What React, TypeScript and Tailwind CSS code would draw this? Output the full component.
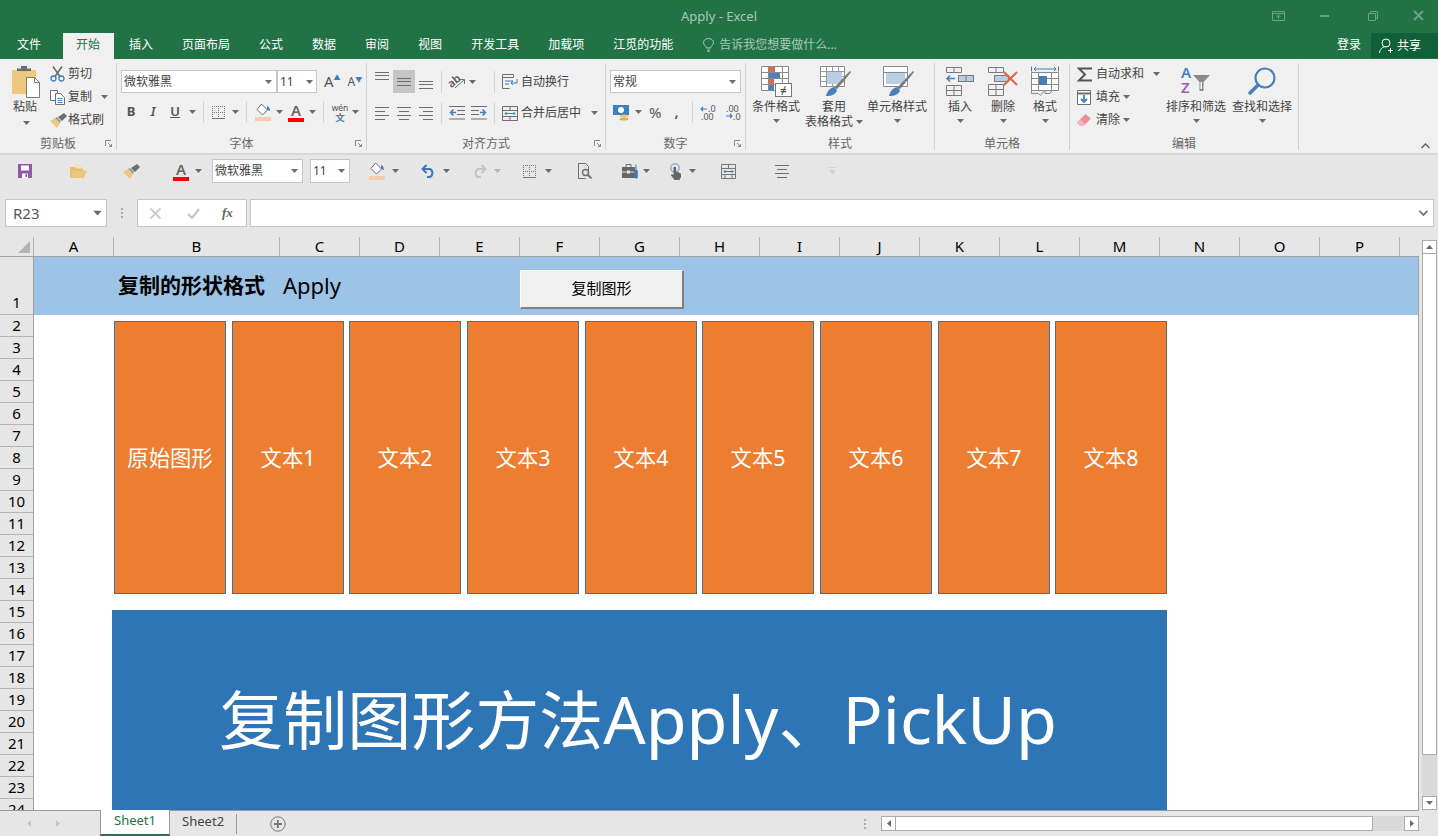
import type { ReactNode } from 'react'

type IconProps = { className?: string }

const COLUMNS = [
  { name: 'A', w: 'w-[80px]' }, { name: 'B', w: 'w-[166px]' }, { name: 'C', w: 'w-[80px]' }, { name: 'D', w: 'w-[80px]' },
  { name: 'E', w: 'w-[80px]' }, { name: 'F', w: 'w-[80px]' }, { name: 'G', w: 'w-[80px]' }, { name: 'H', w: 'w-[80px]' },
  { name: 'I', w: 'w-[80px]' }, { name: 'J', w: 'w-[80px]' }, { name: 'K', w: 'w-[80px]' }, { name: 'L', w: 'w-[80px]' },
  { name: 'M', w: 'w-[80px]' }, { name: 'N', w: 'w-[80px]' }, { name: 'O', w: 'w-[80px]' }, { name: 'P', w: 'w-[80px]' },
]

const SHAPES = [
  { label: '原始图形', gap: 'ml-[80px]' },
  { label: '文本1', gap: 'ml-[6px]' },
  { label: '文本2', gap: 'ml-[5px]' },
  { label: '文本3', gap: 'ml-[6px]' },
  { label: '文本4', gap: 'ml-[6px]' },
  { label: '文本5', gap: 'ml-[5px]' },
  { label: '文本6', gap: 'ml-[6px]' },
  { label: '文本7', gap: 'ml-[6px]' },
  { label: '文本8', gap: 'ml-[5px]' },
]

const TABS = ['插入', '页面布局', '公式', '数据', '审阅', '视图', '开发工具', '加载项', '江觅的功能']

const ROWS = Array.from({ length: 23 }, (_, i) => i + 2)

/* ---------- 小图标 ---------- */

function Caret({ className = '' }: IconProps) {
  return (
    <svg className={`w-[7px] h-[4px] shrink-0 ${className}`} viewBox="0 0 7 4">
      <path d="M0 0h7L3.5 4z" fill="#6b6b6b" />
    </svg>
  )
}

function Launcher() {
  return (
    <svg className="w-[7px] h-[7px]" viewBox="0 0 7 7" fill="none" stroke="#8a8a8a">
      <path d="M.5 6V.5H6M3 3l3.5 3.5M4 6.5h2.500V4" />
    </svg>
  )
}

function Paste() {
  return (
    <svg className="w-[30px] h-[33px]" viewBox="0 0 30 33">
      <rect x="0" y="5" width="24" height="24" rx="1" fill="#edc87e" />
      <path d="M5 6V3.500h4V1h6v2.500h4V6z" fill="#6e6e6e" />
      <path d="M14.500 12.500h8l5 5v15h-13z" fill="#fff" stroke="#7a7a7a" />
      <path d="M22.500 12.500v5h5" fill="none" stroke="#7a7a7a" />
    </svg>
  )
}

function Scissors() {
  return (
    <svg className="w-[15px] h-[16px]" viewBox="0 0 15 16" fill="none">
      <path d="M3 .5l7 10M12 .5l-7 10" stroke="#6a6a6a" strokeWidth="1.600" />
      <circle cx="3.500" cy="12.500" r="2.500" stroke="#3f7fbf" strokeWidth="1.300" />
      <circle cx="11.500" cy="12.500" r="2.500" stroke="#3f7fbf" strokeWidth="1.300" />
    </svg>
  )
}

function CopyDocs() {
  return (
    <svg className="w-[15px] h-[15px]" viewBox="0 0 15 15" fill="#fff" stroke="#6f6f6f">
      <path d="M.5.500h7v10h-7z" />
      <path d="M5.500 3.500h5l4 4v7h-9z" />
      <path d="M7.500 8.500h5M7.500 10.500h5M7.500 12.500h5" stroke="#4a7fb8" />
    </svg>
  )
}

function Brush({ className = '' }: IconProps) {
  return (
    <svg className={`w-[17px] h-[15px] ${className}`} viewBox="0 0 17 15">
      <path d="M0 8l5-3 5 5-3 5z" fill="#edc87e" />
      <path d="M5 5l2-1 4 4-1 2z" fill="#9a9a9a" />
      <path d="M8 4l6-4 3 3-5 5z" fill="#6e6e6e" />
    </svg>
  )
}

function Borders({ className = '' }: IconProps) {
  return (
    <svg className={`w-[13px] h-[13px] ${className}`} viewBox="0 0 13 13" fill="none" stroke="#777" strokeDasharray="1 1">
      <path d="M0 .5h13M0 6.500h13M6.500 0v13M.5 0v13M12.500 0v13" />
      <path d="M0 12.500h13" strokeDasharray="none" />
    </svg>
  )
}

function Bucket({ className = '' }: IconProps) {
  return (
    <svg className={`w-[16px] h-[18px] ${className}`} viewBox="0 0 16 18">
      <path d="M6.500 1l6 6-5 5-5.500-5.500z" fill="#fff" stroke="#6b6b6b" />
      <path d="M12 3c2 1 3 2 3 5-1.500-.5-2-1-3-1.500z" fill="#4a7fb8" />
      <rect y="14" width="16" height="4" fill="#f8cbad" />
    </svg>
  )
}

function FontColor({ className = '' }: IconProps) {
  return (
    <div className={`w-[16px] flex flex-col items-center ${className}`}>
      <span className="text-[15px] leading-[15px] font-semibold text-[#666]">A</span>
      <span className="block w-[16px] h-[4px] bg-[#ff0000]" />
    </div>
  )
}

function Wen() {
  return (
    <svg className="w-[16px] h-[17px] overflow-visible" viewBox="0 0 16 17">
      <text x="8" y="7" textAnchor="middle" fontSize="8.500" fill="#555">wén</text>
      <text x="8" y="17" textAnchor="middle" fontSize="9.500" fontWeight="700" fill="#3f7fbf">文</text>
    </svg>
  )
}

function Lines({ kind, className = '' }: { kind: 'left' | 'center' | 'right'; className?: string }) {
  const d =
    kind === 'left' ? 'M0 .5h14M0 4.500h10M0 8.500h14M0 12.500h10'
    : kind === 'center' ? 'M0 .5h14M2 4.500h10M0 8.500h14M2 12.500h10'
    : 'M0 .5h14M4 4.500h10M0 8.500h14M4 12.500h10'
  return (
    <svg className={`w-[14px] h-[13px] ${className}`} viewBox="0 0 14 13" fill="none" stroke="#6e6e6e">
      <path d={d} />
    </svg>
  )
}

function VAlign() {
  return (
    <svg className="w-[14px] h-[8px]" viewBox="0 0 14 8" fill="none" stroke="#6e6e6e">
      <path d="M0 .5h14M0 3.500h14M0 7.500h14" />
    </svg>
  )
}

function Orient() {
  return (
    <svg className="w-[16px] h-[15px] overflow-visible" viewBox="0 0 16 15" fill="none">
      <text x="-1" y="11" fontSize="11" fontWeight="600" fill="#555" transform="rotate(-40 5 8)">ab</text>
      <path d="M6 14L15 6M11 5.500h4.500V10" stroke="#6e6e6e" />
    </svg>
  )
}

function Indent({ flip }: { flip?: boolean }) {
  return (
    <svg className={`w-[16px] h-[14px] ${flip ? '-scale-x-100' : ''}`} viewBox="0 0 16 14" fill="none">
      <path d="M0 .5h16M8 4.500h8M8 8.500h8M0 13h16" stroke="#6e6e6e" />
      <path d="M7 6.500H2M4.500 3.500l-3 3 3 3" stroke="#3f7fbf" strokeWidth="1.500" />
    </svg>
  )
}

function Wrap() {
  return (
    <svg className="w-[16px] h-[15px]" viewBox="0 0 16 15" fill="none" stroke="#6e6e6e">
      <path d="M.5.500h11v3H.5zM.5 3.500v11h7" />
      <path d="M3 7h8M3 10h4" stroke="#3f7fbf" />
      <path d="M15 5v4h-6M11 7l-2 2 2 2" stroke="#3f7fbf" />
    </svg>
  )
}

function Merge() {
  return (
    <svg className="w-[16px] h-[15px]" viewBox="0 0 16 15" fill="none" stroke="#6e6e6e">
      <path d="M.5.500h15v14H.5zM.5 4.500h15M.5 10.500h15M8 .5v4M8 10.500v4" />
      <path d="M3 7.500h10M4.500 6L3 7.500 4.500 9M11.500 6L13 7.500 11.500 9" stroke="#3f7fbf" />
    </svg>
  )
}

function Currency() {
  return (
    <svg className="w-[17px] h-[17px]" viewBox="0 0 17 17">
      <rect x="0" y="1" width="16" height="10" fill="#3f7fbf" />
      <circle cx="8" cy="6" r="3" fill="#fff" />
      <ellipse cx="11" cy="12" rx="4.500" ry="1.500" fill="#edc87e" />
      <ellipse cx="11" cy="15" rx="4.500" ry="1.500" fill="#e2ad5a" />
    </svg>
  )
}

function Decimal({ up }: { up: boolean }) {
  return (
    <svg className="w-[16px] h-[15px] overflow-visible" viewBox="0 0 16 15">
      <text x={up ? 8 : 1} y="7" fontSize="9" fill="#555">{up ? '.0' : '.00'}</text>
      <text x={up ? 1 : 8} y="15" fontSize="9" fill="#555">{up ? '.00' : '.0'}</text>
      <path d={up ? 'M7 4H1M3 2L1 4l2 2' : 'M1 11h6M5 9l2 2-2 2'} fill="none" stroke="#3f7fbf" strokeWidth="1.200" />
    </svg>
  )
}

function CondFormat() {
  return (
    <svg className="w-[31px] h-[31px]" viewBox="0 0 31 31">
      <path d="M.5.500h27v24H.5zM.5 6.500h27M.5 12.500h27M.5 18.500h27M7.500.5v24M21.500.5v24" fill="#fff" stroke="#8a8a8a" />
      <rect x="8" y="1" width="6" height="5" fill="#e0684a" />
      <rect x="8" y="7" width="11" height="5" fill="#4a7fb8" />
      <rect x="8" y="13" width="5" height="5" fill="#e0684a" />
      <rect x="8" y="19" width="5" height="5" fill="#4a7fb8" />
      <rect x="14.500" y="17.500" width="16" height="13" fill="#fff" stroke="#777" />
      <text x="22.500" y="28" textAnchor="middle" fontSize="11" fontWeight="700" fill="#555">≠</text>
    </svg>
  )
}

function TableStyle({ cell }: { cell?: boolean }) {
  return (
    <svg className="w-[31px] h-[30px] ml-[3px]" viewBox="0 0 31 30">
      <path d="M.5.500h24v20H.5z" fill="#fff" stroke="#8a8a8a" />
      {cell
        ? <path d="M.5 6.500h24" stroke="#8a8a8a" />
        : <path d="M.5 5.500h24M.5 10.500h24M.5 15.500h24M6.500.5v20M12.500.5v20M18.500.5v20" stroke="#9a9a9a" />}
      <rect x={cell ? 3 : 7} y={cell ? 7 : 6} width={cell ? 19 : 15} height={cell ? 11 : 12} fill="#b9cde5" />
      <path d="M14 22l12-13 4-4 1 1-3 4-11 13z" fill="#7a7a7a" />
      <path d="M6 30c1-5 4-8 8-9l3 3c-1 4-5 6-11 6z" fill="#4a7fb8" />
    </svg>
  )
}

function InsertCells() {
  return (
    <svg className="w-[28px] h-[29px]" viewBox="0 0 28 29" fill="none" stroke="#7a7a7a">
      <path d="M.5.500h15v5H.5zM8 .5v5M.5 18.500h15v10H.5zM.5 23.500h15M8 18.500v10" />
      <rect x="12.500" y="8.500" width="15" height="6" fill="#b9cde5" />
      <path d="M20 8.500v6" />
      <path d="M9 11.500H1M4 8.500l-3 3 3 3" stroke="#3f7fbf" strokeWidth="1.500" />
    </svg>
  )
}

function DeleteCells() {
  return (
    <svg className="w-[30px] h-[29px]" viewBox="0 0 30 29" fill="none" stroke="#7a7a7a">
      <path d="M.5.500h15v5H.5zM8 .5v5M.5 17.500h15v11H.5zM.5 22.500h15M8 17.500v11" />
      <rect x="6.500" y="8.500" width="14" height="6" fill="#b9cde5" />
      <path d="M16 5l13 13M29 5L16 18" stroke="#e0684a" strokeWidth="2.200" />
    </svg>
  )
}

function FormatCells() {
  return (
    <svg className="w-[28px] h-[31px]" viewBox="0 0 28 31" fill="none">
      <path d="M.5.500v5M27.500.5v5M3 3h22M5 1L3 3l2 2M23 1l2 2-2 2" stroke="#3f7fbf" />
      <path d="M.5 6.500h27v18H.5zM.5 12.500h27M.5 18.500h27M7.500 6.500v18M20.500 6.500v18" stroke="#8a8a8a" fill="#fff" />
      <rect x="8" y="10" width="8" height="9" fill="#4a7fb8" />
      <path d="M.5 24.500v3h7l2 2 3-4M14 24.500v3h5l2-3" stroke="#8a8a8a" />
    </svg>
  )
}

function Sigma() {
  return (
    <svg className="w-[16px] h-[15px]" viewBox="0 0 16 15" fill="none" stroke="#555" strokeWidth="2">
      <path d="M15 1.500H2l6 6-6 6h13" />
    </svg>
  )
}

function FillDown() {
  return (
    <svg className="w-[14px] h-[15px]" viewBox="0 0 14 15" fill="#fff" stroke="#6e6e6e">
      <path d="M.5.500h13v14H.5z" />
      <path d="M.5 3.500h13" strokeWidth="2" />
      <path d="M7 5v7M4 9l3 3 3-3" fill="none" stroke="#3f7fbf" strokeWidth="1.800" />
    </svg>
  )
}

function Eraser() {
  return (
    <svg className="w-[14px] h-[13px]" viewBox="0 0 14 13">
      <path d="M0 8.500L8.500 0 14 4.500 6.500 12H3z" fill="#ee8f9b" />
      <path d="M0 8.500L3 12h3.500L8 10.500 3.500 5.500z" fill="#f3b7bf" />
    </svg>
  )
}

function SortFilter() {
  return (
    <svg className="w-[30px] h-[30px] overflow-visible" viewBox="0 0 30 30">
      <text x="0" y="12" fontSize="15" fontWeight="600" fill="#3f7fbf">A</text>
      <text x="0" y="27" fontSize="15" fontWeight="600" fill="#9a5fb8">Z</text>
      <path d="M12 9h17l-6.500 7v9h-4v-9z" fill="#8a8a8a" />
      <path d="M19.500 16v7h1.500v-7z" fill="#fff" />
    </svg>
  )
}

function Find() {
  return (
    <svg className="w-[28px] h-[28px]" viewBox="0 0 28 28" fill="none" stroke="#4a7fb8">
      <circle cx="17" cy="11" r="9.500" strokeWidth="2.200" />
      <path d="M10 18L2 26" strokeWidth="3.500" strokeLinecap="round" />
    </svg>
  )
}

function Save({ className = '' }: IconProps) {
  return (
    <svg className={`w-[14px] h-[14px] ${className}`} viewBox="0 0 14 14">
      <path d="M0 0h14v14H0z" fill="#8e5aa8" />
      <path d="M3 1.500h8v5H3z" fill="#fff" />
      <path d="M4 9.500h6V14H4z" fill="#fff" />
      <path d="M7.500 10h1.500v3H7.500z" fill="#8e5aa8" />
    </svg>
  )
}

function Folder({ className = '' }: IconProps) {
  return (
    <svg className={`w-[17px] h-[13px] ${className}`} viewBox="0 0 17 13">
      <path d="M0 2h5l1 1.500h7V13H0z" fill="#e5bd74" />
      <path d="M4 0h9v3H6z" fill="#f5e3b8" />
      <path d="M3 5.500h14L14 13H0z" fill="#edc87e" />
    </svg>
  )
}

function Undo({ className = '', muted }: IconProps & { muted?: boolean }) {
  return (
    <svg className={`h-[14px] w-[15px] ${muted ? '-scale-x-100' : ''} ${className}`} viewBox="0 0 15 14" fill="none" stroke={muted ? '#c4c4c4' : '#3f78b5'} strokeWidth="2">
      <path d="M2 5h7a4.500 4.500 0 010 8H6M5.500 1L1.500 5l4 4" />
    </svg>
  )
}

function Preview({ className = '' }: IconProps) {
  return (
    <svg className={`w-[14px] h-[16px] ${className}`} viewBox="0 0 14 16" fill="#e6e6e6" stroke="#6e6e6e">
      <path d="M.5.500h7l3 3v5M.5.500v15h7" />
      <circle cx="7.500" cy="9.500" r="3" strokeWidth="1.400" />
      <path d="M10 12l3.500 3.500" strokeWidth="1.800" />
    </svg>
  )
}

function Toolbox({ className = '' }: IconProps) {
  return (
    <svg className={`w-[16px] h-[15px] ${className}`} viewBox="0 0 16 15">
      <path d="M4 3V0.500h5V3" fill="none" stroke="#666" />
      <path d="M0 3h13v11H0z" fill="#666" />
      <path d="M0 7.500h13v1H0z" fill="#e6e6e6" />
      <rect x="5" y="6.500" width="3" height="3" fill="#e6e6e6" />
      <path d="M14 0.500v6M12.800 6.500h2.400V14h-2.400z" fill="#3f78b5" stroke="#3f78b5" />
    </svg>
  )
}

function Touch({ className = '' }: IconProps) {
  return (
    <svg className={`w-[12px] h-[17px] ${className}`} viewBox="0 0 12 17">
      <circle cx="5" cy="5" r="4.200" fill="none" stroke="#8fb4d9" strokeWidth="1.600" />
      <path d="M3.500 5a1.300 1.300 0 012.600 0v3.500l4 1.500.9 1v3l-1.500 3H4.500L1 12.500l.5-1.500 2 1z" fill="#666" />
    </svg>
  )
}

function ColWidth({ className = '' }: IconProps) {
  return (
    <svg className={`w-[15px] h-[15px] ${className}`} viewBox="0 0 15 15" fill="none" stroke="#777">
      <path d="M.5.500h14v14H.5zM.5 4.500h14M.5 10.500h14M7.500.5v4M4 10.500v4M11 10.500v4" />
      <path d="M3 7.500h9M4.500 6L3 7.500 4.500 9M10.500 6L12 7.500 10.500 9" stroke="#3f7fbf" />
    </svg>
  )
}

/* ---------- 功能区 ---------- */

function Group({ width, label, launcher, children }: { width: string; label: string; launcher?: boolean; children: ReactNode }) {
  return (
    <div className={`${width} h-[87px] shrink-0 flex flex-col border-r border-[#d2d2d2]`}>
      <div className="h-[74px] relative">{children}</div>
      <div className="h-[13px] grid grid-cols-[1fr_auto_1fr] items-center text-[12px] leading-[13px] text-[#666]">
        <span />
        <span>{label}</span>
        {launcher ? <span className="justify-self-end mr-[4px] flex"><Launcher /></span> : <span />}
      </div>
    </div>
  )
}

function BigButton({ width, icon, lines, inlineCaret }: { width: string; icon: ReactNode; lines: string[]; inlineCaret?: boolean }) {
  return (
    <div className={`${width} shrink-0 flex flex-col items-center`}>
      <div className="h-[36px] flex items-center justify-center">{icon}</div>
      <span className="text-[12px] leading-[15px] text-[#444] whitespace-nowrap">{lines[0]}</span>
      {lines[1] ? (
        <span className="text-[12px] leading-[15px] text-[#444] whitespace-nowrap flex items-center">
          {lines[1]}{inlineCaret && <Caret className="ml-[3px]" />}
        </span>
      ) : (
        <Caret className="mt-[5px]" />
      )}
    </div>
  )
}

function SmallRow({ icon, text, caret, caretGap = 'ml-[3px]', iconBox = 'w-[18px]' }: { icon: ReactNode; text: string; caret?: boolean; caretGap?: string; iconBox?: string }) {
  return (
    <div className="h-[20px] flex items-center text-[12px] text-[#444] whitespace-nowrap">
      <span className={`${iconBox} flex shrink-0`}>{icon}</span>
      <span>{text}</span>
      {caret && <Caret className={caretGap} />}
    </div>
  )
}

function Combo({ width, text, caretClass = 'ml-auto mr-[4px]', height = 'h-[23px]' }: { width: string; text: string; caretClass?: string; height?: string }) {
  return (
    <div className={`${width} ${height} shrink-0 bg-white border border-[#c6c6c6] flex items-center pl-[2px] text-[12px] text-[#444] whitespace-nowrap overflow-hidden`}>
      <span>{text}</span>
      <Caret className={caretClass} />
    </div>
  )
}

function Sep({ className = '' }: IconProps) {
  return <span className={`block w-px h-[22px] bg-[#d2d2d2] shrink-0 ${className}`} />
}

function Ribbon() {
  return (
    <div className="h-[94px] bg-[#f0f0f0] flex pt-[4px]">
      <Group width="w-[117px]" label="剪贴板" launcher>
        <div className="flex">
          <div className="w-[50px] flex flex-col items-center pt-[2px]">
            <div className="ml-[4px]"><Paste /></div>
            <span className="text-[12px] leading-[16px] mt-[1px] text-[#444]">粘贴</span>
            <Caret className="mt-[6px] ml-[2px]" />
          </div>
          <div className="flex flex-col gap-[3px] mt-[1px]">
            <SmallRow icon={<Scissors />} text="剪切" />
            <SmallRow icon={<CopyDocs />} text="复制" caret caretGap="ml-[9px]" />
            <SmallRow icon={<Brush />} text="格式刷" />
          </div>
        </div>
      </Group>

      <Group width="w-[250px]" label="字体" launcher>
        <div className="flex items-center mt-[7px] ml-[4px]">
          <Combo width="w-[156px]" text="微软雅黑" />
          <Combo width="w-[40px]" text="11" caretClass="ml-auto mr-[3px]" />
          <span className="ml-[7px] text-[15px] leading-none text-[#555] flex items-start">A<span className="text-[7px] text-[#3f7fbf]">▲</span></span>
          <span className="ml-[7px] text-[12px] leading-none text-[#555] flex items-start">A<span className="text-[7px] text-[#3f7fbf]">▼</span></span>
        </div>
        <div className="flex items-center mt-[7px] h-[24px] ml-[3px] text-[#555]">
          <span className="w-[22px] text-center text-[13px] font-bold">B</span>
          <span className="w-[22px] text-center text-[13px] italic font-semibold">I</span>
          <span className="w-[22px] text-center text-[13px] font-semibold underline">U</span>
          <Caret className="ml-[3px]" />
          <Sep className="ml-[7px]" />
          <Borders className="ml-[8px]" />
          <Caret className="ml-[7px]" />
          <Sep className="ml-[7px]" />
          <Bucket className="ml-[8px]" />
          <Caret className="ml-[5px]" />
          <FontColor className="ml-[5px]" />
          <Caret className="ml-[5px]" />
          <Sep className="ml-[7px]" />
          <span className="ml-[8px] flex"><Wen /></span>
          <Caret className="ml-[4px]" />
        </div>
      </Group>

      <Group width="w-[239px]" label="对齐方式" launcher>
        <div className="flex items-center mt-[7px] h-[23px] ml-[4px]">
          <span className="w-[22px] h-[23px] flex justify-center items-start pt-[2px]"><VAlign /></span>
          <span className="w-[22px] h-[23px] flex justify-center items-center bg-[#c6c6c6]"><VAlign /></span>
          <span className="w-[22px] h-[23px] flex justify-center items-end pb-[4px]"><VAlign /></span>
          <Sep className="ml-[4px]" />
          <span className="ml-[7px] flex"><Orient /></span>
          <Caret className="ml-[4px]" />
          <Sep className="ml-[18px]" />
          <div className="ml-[7px] flex items-center gap-[3px] text-[12px] text-[#444]"><Wrap /><span>自动换行</span></div>
        </div>
        <div className="flex items-center mt-[8px] h-[24px] ml-[8px]">
          <Lines kind="left" />
          <Lines kind="center" className="ml-[8px]" />
          <Lines kind="right" className="ml-[8px]" />
          <Sep className="ml-[8px]" />
          <span className="ml-[7px] flex"><Indent /></span>
          <span className="ml-[6px] flex"><Indent flip /></span>
          <Sep className="ml-[7px]" />
          <div className="ml-[7px] flex items-center gap-[3px] text-[12px] text-[#444]"><Merge /><span>合并后居中</span></div>
          <Caret className="ml-[10px]" />
        </div>
      </Group>

      <Group width="w-[140px]" label="数字" launcher>
        <div className="mt-[7px] ml-[4px]">
          <Combo width="w-[131px]" text="常规" />
        </div>
        <div className="flex items-center mt-[7px] h-[24px] ml-[7px]">
          <Currency />
          <Caret className="ml-[5px]" />
          <span className="ml-[7px] text-[15px] text-[#555]">%</span>
          <span className="ml-[13px] text-[14px] font-bold text-[#555] leading-none">,</span>
          <Sep className="ml-[14px]" />
          <span className="ml-[7px] flex"><Decimal up /></span>
          <span className="ml-[9px] flex"><Decimal up={false} /></span>
        </div>
      </Group>

      <Group width="w-[189px]" label="样式">
        <div className="flex">
          <BigButton width="w-[60px]" icon={<CondFormat />} lines={['条件格式']} />
          <BigButton width="w-[56px]" icon={<TableStyle />} lines={['套用', '表格格式']} inlineCaret />
          <BigButton width="w-[70px]" icon={<TableStyle cell />} lines={['单元格样式']} />
        </div>
      </Group>

      <Group width="w-[135px]" label="单元格">
        <div className="flex ml-[4px]">
          <BigButton width="w-[42px]" icon={<InsertCells />} lines={['插入']} />
          <BigButton width="w-[44px]" icon={<DeleteCells />} lines={['删除']} />
          <BigButton width="w-[40px]" icon={<FormatCells />} lines={['格式']} />
        </div>
      </Group>

      <Group width="w-[229px]" label="编辑">
        <div className="flex">
          <div className="w-[92px] pl-[7px] mt-[1px] flex flex-col gap-[3px]">
            <SmallRow icon={<Sigma />} text="自动求和" caret caretGap="ml-[9px]" iconBox="w-[19px]" />
            <SmallRow icon={<FillDown />} text="填充" caret caretGap="ml-[3px]" iconBox="w-[19px]" />
            <SmallRow icon={<Eraser />} text="清除" caret caretGap="ml-[3px]" iconBox="w-[19px]" />
          </div>
          <BigButton width="w-[68px]" icon={<SortFilter />} lines={['排序和筛选']} />
          <BigButton width="w-[64px]" icon={<Find />} lines={['查找和选择']} />
        </div>
      </Group>

      <div className="flex-1 flex justify-end items-end pb-[4px] pr-[8px]">
        <svg className="w-[9px] h-[6px]" viewBox="0 0 9 6" fill="none" stroke="#666" strokeWidth="1.500">
          <path d="M.5 5l4-4 4 4" />
        </svg>
      </div>
    </div>
  )
}

function QuickBar() {
  return (
    <div className="h-[46px] bg-[#e6e6e6] border-t-2 border-[#d8d8d8] flex items-start pt-[4px]">
      <div className="h-[24px] flex items-center">
        <Save className="ml-[18px]" />
        <Folder className="ml-[38px]" />
        <Brush className="ml-[36px]" />
        <FontColor className="ml-[33px]" />
        <Caret className="ml-[6px]" />
        <Combo width="w-[91px] ml-[10px]" height="h-[24px]" text="微软雅黑" />
        <Combo width="w-[40px] ml-[7px]" height="h-[24px]" text="11" />
        <Bucket className="ml-[19px]" />
        <Caret className="ml-[7px]" />
        <Undo className="ml-[22px]" />
        <Caret className="ml-[7px]" />
        <Undo muted className="ml-[22px]" />
        <Caret className="ml-[7px] opacity-40" />
        <Borders className="ml-[22px]" />
        <Caret className="ml-[9px]" />
        <Preview className="ml-[26px]" />
        <Toolbox className="ml-[30px]" />
        <Caret className="ml-[5px]" />
        <Touch className="ml-[20px]" />
        <Caret className="ml-[7px]" />
        <ColWidth className="ml-[25px]" />
        <Lines kind="center" className="ml-[39px]" />
        <svg className="w-[7px] h-[8px] ml-[40px]" viewBox="0 0 7 8">
          <path d="M0 0h7v1H0zM0 3h7L3.500 8z" fill="#d2d2d2" />
        </svg>
      </div>
    </div>
  )
}

function FormulaBar() {
  return (
    <div className="h-[28px] bg-[#e6e6e6] flex">
      <div className="ml-[5px] w-[102px] bg-white border border-[#c6c6c6] flex items-center pl-[7px] text-[15px] text-[#555]">
        <span>R23</span>
        <Caret className="ml-auto mr-[5px] scale-125" />
      </div>
      <div className="w-[30px] flex flex-col items-center justify-center gap-[2px]">
        <span className="w-[2px] h-[2px] bg-[#aaa]" />
        <span className="w-[2px] h-[2px] bg-[#aaa]" />
        <span className="w-[2px] h-[2px] bg-[#aaa]" />
      </div>
      <div className="w-[110px] bg-white border border-[#c6c6c6] flex items-center">
        <svg className="ml-[12px] w-[11px] h-[11px]" viewBox="0 0 11 11" fill="none" stroke="#c6c6c6" strokeWidth="1.800">
          <path d="M.5.500l10 10M10.500.5l-10 10" />
        </svg>
        <svg className="ml-[26px] w-[13px] h-[11px]" viewBox="0 0 13 11" fill="none" stroke="#c6c6c6" strokeWidth="2.200">
          <path d="M1 6l4 4 7-9" />
        </svg>
        <span className="ml-[22px] text-[13px] italic font-semibold text-[#666] font-['Liberation_Serif',serif]">fx</span>
      </div>
      <div className="ml-[3px] w-[1184px] bg-white border border-[#c6c6c6] flex items-center justify-end pr-[5px]">
        <svg className="w-[9px] h-[6px]" viewBox="0 0 9 6" fill="none" stroke="#777" strokeWidth="1.800">
          <path d="M.5 1l4 4 4-4" />
        </svg>
      </div>
    </div>
  )
}

function Sheet() {
  return (
    <div className="shrink-0 flex flex-col min-h-0 w-[1419px]">
      {/* 列标题 */}
      <div className="h-[20px] flex shrink-0 border-b border-[#a0a0a0]">
        <div className="w-[34px] flex items-end justify-end pr-[3px] pb-[3px] border-r border-[#b4b4b4]">
          <svg className="w-[12px] h-[12px]" viewBox="0 0 12 12"><path d="M12 0v12H0z" fill="#b4b4b4" /></svg>
        </div>
        {COLUMNS.map(col => (
          <div key={col.name} className={`${col.w} border-r border-[#b4b4b4] flex items-center justify-center text-[15px] text-black leading-none`}>
            {col.name}
          </div>
        ))}
      </div>

      <div className="flex-1 flex min-h-0 overflow-hidden border-r border-[#a0a0a0]">
        {/* 行标题 */}
        <div className="w-[34px] shrink-0 border-r border-[#a0a0a0] text-[15px] text-black">
          <div className="h-[58px] border-b border-[#b4b4b4] flex items-end justify-center pb-[2px] leading-[20px]">1</div>
          {ROWS.map(r => (
            <div key={r} className="h-[22px] border-b border-[#b4b4b4] flex items-center justify-center leading-none">{r}</div>
          ))}
        </div>

        <div className="flex-1 bg-white min-w-0 overflow-hidden">
          <div className="h-[58px] bg-[#9dc3e6] flex items-start">
            <div className="ml-[84px] mt-[13px] flex items-center h-[32px] text-black whitespace-nowrap">
              <span className="text-[21px] font-bold">复制的形状格式</span>
              <span className="ml-[18px] text-[22px] -mt-[2px]">Apply</span>
            </div>
            <button className="ml-[179px] mt-[13px] w-[164px] h-[39px] pb-[2px] bg-[#f0f0f0] border border-t-white border-l-white border-r-[#7f7f7f] border-b-[#7f7f7f] border-b-2 border-r-2 text-[15px] text-black">
              复制图形
            </button>
          </div>

          <div className="flex mt-[6px]">
            {SHAPES.map(s => (
              <div key={s.label} className={`${s.gap} w-[112px] h-[273px] shrink-0 bg-[#ed7d31] border border-[#41719c] flex items-center justify-center text-[21.330px] text-white`}>
                {s.label}
              </div>
            ))}
          </div>

          <div className="ml-[78px] mt-[16px] w-[1055px] h-[216px] pr-[3px] bg-[#2e75b6] flex items-center justify-center text-[64px] leading-none text-white whitespace-nowrap">
            <span>复制图形方法<span className="text-[66.500px]">Apply</span>、<span className="text-[66.500px]">PickUp</span></span>
          </div>
        </div>
      </div>
    </div>
  )
}

function VScroll() {
  return (
    <div className="ml-[3px] w-[15px] shrink-0 pt-[3px] flex flex-col">
      <div className="h-[14px] bg-white border border-[#ababab] flex items-center justify-center">
        <svg className="w-[7px] h-[4px]" viewBox="0 0 7 4"><path d="M0 4h7L3.500 0z" fill="#6b6b6b" /></svg>
      </div>
      <div className="flex-1 bg-[#d9d9d9] flex flex-col">
        <div className="h-[501px] bg-white border-x border-b border-[#ababab]" />
      </div>
      <div className="h-[14px] bg-white border border-[#ababab] flex items-center justify-center">
        <Caret />
      </div>
    </div>
  )
}

function BottomBar() {
  return (
    <div className="h-[26px] shrink-0 bg-[#e6e6e6] flex">
      <div className="w-[100px] h-full border-t border-[#9a9a9a] flex items-center">
        <svg className="ml-[27px] w-[4px] h-[7px]" viewBox="0 0 4 7"><path d="M4 0v7L0 3.500z" fill="#c6c6c6" /></svg>
        <svg className="ml-[25px] w-[4px] h-[7px]" viewBox="0 0 4 7"><path d="M0 0v7l4-3.500z" fill="#c6c6c6" /></svg>
      </div>
      <div className="w-[70px] h-full bg-white border-x border-[#9a9a9a] border-b-2 border-b-[#217346] flex items-center justify-center text-[13px] text-[#217346] pb-[2px]">
        Sheet1
      </div>
      <div className="w-[1249px] h-full border-t border-[#9a9a9a] flex items-center text-[13px] text-[#444]">
        <span className="w-[67px] text-center pb-[3px]">Sheet2</span>
        <span className="w-px h-[20px] bg-[#9a9a9a]" />
        <svg className="ml-[33px] w-[16px] h-[16px]" viewBox="0 0 16 16" fill="none" stroke="#777">
          <circle cx="8" cy="8" r="7.300" />
          <path d="M8 4v8M4 8h8" strokeWidth="1.800" />
        </svg>
        <div className="ml-[578px] flex flex-col gap-[2px]">
          <span className="w-[2px] h-[2px] bg-[#aaa]" />
          <span className="w-[2px] h-[2px] bg-[#aaa]" />
          <span className="w-[2px] h-[2px] bg-[#aaa]" />
        </div>
        <div className="ml-[15px] flex h-[15px]">
          <div className="w-[15px] bg-white border border-[#ababab] flex items-center justify-center">
            <svg className="w-[4px] h-[7px]" viewBox="0 0 4 7"><path d="M4 0v7L0 3.500z" fill="#6b6b6b" /></svg>
          </div>
          <div className="w-[477px] bg-white border-y border-r border-[#ababab]" />
          <div className="w-[31px] bg-[#d9d9d9]" />
          <div className="w-[15px] bg-white border border-[#ababab] flex items-center justify-center">
            <svg className="w-[4px] h-[7px]" viewBox="0 0 4 7"><path d="M0 0v7l4-3.500z" fill="#6b6b6b" /></svg>
          </div>
        </div>
      </div>
    </div>
  )
}

export default function App() {
  return (
    <div className="w-[1438px] h-[836px] overflow-hidden flex flex-col bg-[#e6e6e6] font-['Noto_Sans','Noto_Sans_CJK_SC',sans-serif]">
      {/* 标题栏 */}
      <div className="h-[33px] shrink-0 bg-[#217346] flex items-center relative">
        <span className="w-full text-center text-[13px] text-[#a9c8b6]">Apply - Excel</span>
        <div className="absolute right-[14px] top-[10px] flex items-center">
          <svg className="w-[13px] h-[10px]" viewBox="0 0 13 10" fill="none" stroke="#6f9f85">
            <path d="M.5.500h12v9H.5zM.5 2.500h12M6.500 8V4.500M4.500 6l2-2 2 2" />
          </svg>
          <svg className="ml-[35px] w-[9px] h-[2px]" viewBox="0 0 9 2"><path d="M0 0h9v2H0z" fill="#6f9f85" /></svg>
          <svg className="ml-[39px] w-[10px] h-[10px]" viewBox="0 0 10 10" fill="none" stroke="#6f9f85">
            <path d="M.5 2.500h7v7h-7zM2.500 2.500v-2h7v7h-2" />
          </svg>
          <svg className="ml-[35px] w-[11px] h-[11px]" viewBox="0 0 11 11" fill="none" stroke="#6f9f85" strokeWidth="1.800">
            <path d="M1 1l9 9M10 1l-9 9" />
          </svg>
        </div>
      </div>

      {/* 选项卡 */}
      <div className="h-[26px] shrink-0 bg-[#217346] flex text-[12px] text-white whitespace-nowrap">
        <span className="ml-[3px] px-[14px] leading-[24px]">文件</span>
        <span className="ml-[8px] pl-[13px] pr-[14px] bg-[#f0f0f0] text-[#217346] leading-[24px]">开始</span>
        {TABS.map(t => (
          <span key={t} className="ml-px px-[14px] leading-[24px]">{t}</span>
        ))}
        <div className="ml-[16px] flex items-center text-[#a9c8b6] h-[24px]">
          <svg className="w-[11px] h-[14px] mr-[5px]" viewBox="0 0 11 14" fill="none" stroke="#a9c8b6">
            <path d="M3.500 10C3 8 .5 7 .5 4.500a5 4 0 0110 0C10.500 7 8 8 7.500 10zM4 12h3M4.500 13.500h2" />
          </svg>
          告诉我您想要做什么...
        </div>
        <span className="ml-auto mr-[10px] leading-[24px]">登录</span>
        <div className="w-[67px] h-[25px] bg-[#10613a] flex items-center pl-[8px] gap-[3px]">
          <svg className="w-[15px] h-[16px]" viewBox="0 0 15 16" fill="none" stroke="#fff">
            <circle cx="7" cy="5" r="4" />
            <path d="M.5 15c.5-4 3-6 5-6M11.500 10v5M9 12.500h5" />
          </svg>
          <span>共享</span>
        </div>
      </div>

      <Ribbon />
      <QuickBar />
      <FormulaBar />

      <div className="h-[10px] shrink-0" />

      <div className="flex-1 flex min-h-0">
        <Sheet />
        <VScroll />
      </div>

      <BottomBar />
    </div>
  )
}
